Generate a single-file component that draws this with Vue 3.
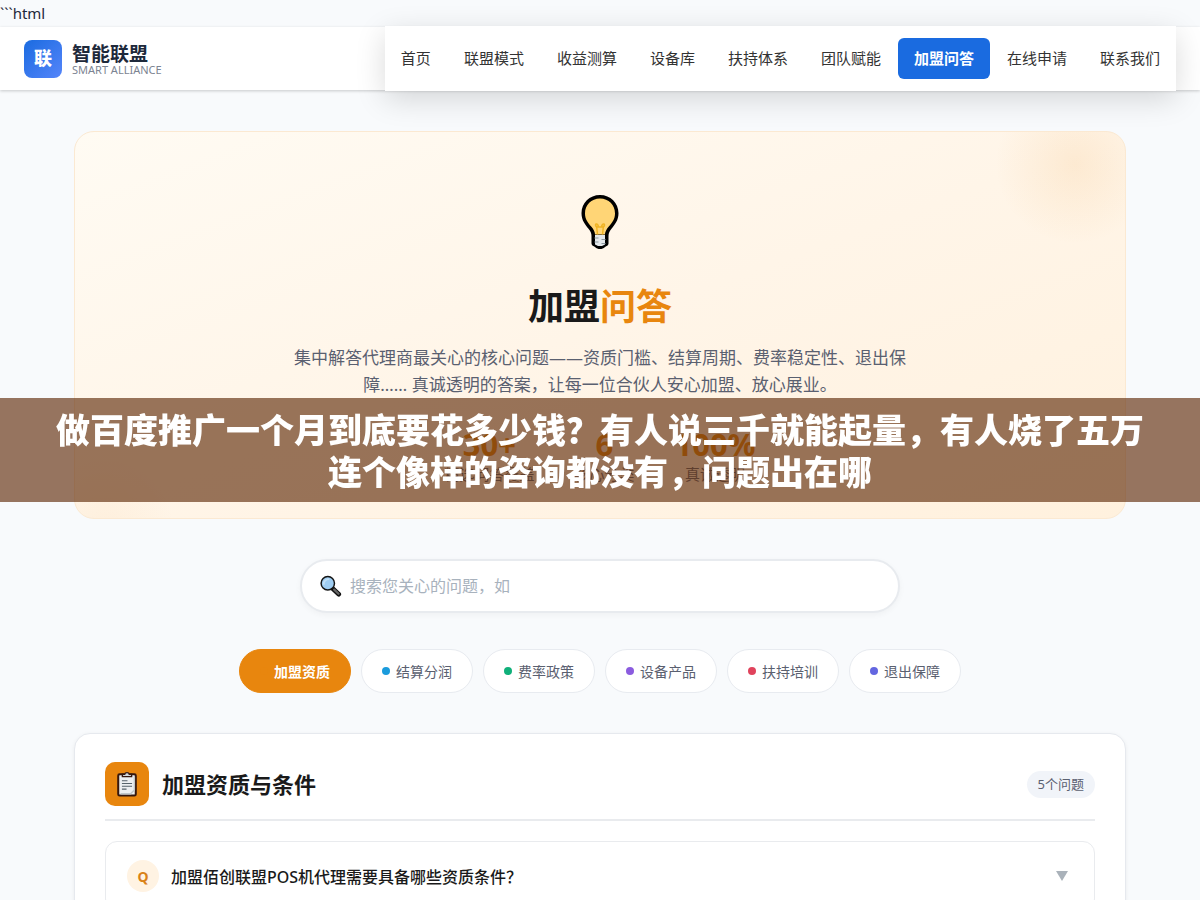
<script setup>
import { ref, computed } from 'vue'

const navItems = ['首页', '联盟模式', '收益测算', '设备库', '扶持体系', '团队赋能', '加盟问答', '在线申请', '联系我们']
const activeNav = ref('加盟问答')

const stats = [
  { value: '30+', label: '精选问答覆盖' },
  { value: '6', label: '核心分类' },
  { value: '100%', label: '真诚透明' },
]

const categories = [
  { name: '加盟资质', tone: 'orange' },
  { name: '结算分润', tone: 'blue' },
  { name: '费率政策', tone: 'green' },
  { name: '设备产品', tone: 'purple' },
  { name: '扶持培训', tone: 'red' },
  { name: '退出保障', tone: 'indigo' },
]
const activeCategory = ref('加盟资质')

const keyword = ref('')
const questions = ['加盟佰创联盟POS机代理需要具备哪些资质条件？']
const visibleQuestions = computed(() => questions.filter(q => q.includes(keyword.value.trim())))
</script>

<template>
  <div class="page">
    <div class="stray-text">```html</div>

    <header class="site-header">
      <a href="#" class="brand">
        <span class="brand-mark">联</span>
        <span class="brand-text">
          <span class="brand-name">智能联盟</span>
          <span class="brand-sub">SMART ALLIANCE</span>
        </span>
      </a>
      <nav class="site-nav">
        <a
          v-for="item in navItems"
          :key="item"
          href="#"
          class="nav-link"
          :class="{ active: item === activeNav }"
          @click.prevent="activeNav = item"
        >{{ item }}</a>
      </nav>
    </header>

    <main class="container">
      <section class="hero">
        <svg class="hero-icon" viewBox="0 0 56 56" aria-hidden="true">
          <path d="M28 1C17.500 1 9.500 9 9.500 19.300c0 7 3.600 11.400 7 15.400 2 2.400 3 4.300 3 7.300v7.500c0 2 2 2.500 3.500 3.500 1.500 1.400 3 2 5 2s3.500-.6 5-2c1.500-1 3.500-1.500 3.500-3.500V42c0-3 1-4.900 3-7.300 3.400-4 7-8.400 7-15.400C46.500 9 38.500 1 28 1z" fill="#000" />
          <path d="M28 4.500c-8.700 0-15 6.600-15 14.900 0 5.700 3 9.300 6.200 13.100 2.100 2.500 3.600 4.700 3.900 8h9.800c.3-3.300 1.800-5.500 3.900-8 3.200-3.800 6.200-7.400 6.200-13.100 0-8.300-6.300-14.900-15-14.900z" fill="#ffd576" />
          <path d="M25.500 40.500l-1-9M30.500 40.500l1-9M24.500 33c-3-3 1.500-5 2 0M31.500 33c3-3-1.500-5-2 0M24.500 33h7" fill="none" stroke="#f0b323" stroke-width="1.500" />
          <path d="M23 41h10v9.500l-3 1.500h-4l-3-1.500z" fill="#e3e8eb" />
          <path d="M22.500 44h4M29.500 45.500h4M22.500 48h4M29.500 49.500h4" stroke="#8d999f" stroke-width="1" />
        </svg>
        <h1 class="hero-title">加盟<span>问答</span></h1>
        <p class="hero-desc">集中解答代理商最关心的核心问题——资质门槛、结算周期、费率稳定性、退出保障…… 真诚透明的答案，让每一位合伙人安心加盟、放心展业。</p>
        <div class="hero-stats">
          <div v-for="stat in stats" :key="stat.label" class="stat">
            <span class="stat-value">{{ stat.value }}</span>
            <span class="stat-label">{{ stat.label }}</span>
          </div>
        </div>
      </section>

      <label class="search">
        <svg class="search-icon" viewBox="0 0 24 24" aria-hidden="true">
          <path d="M13.500 14.500l7 6.500" stroke="#111" stroke-width="5" stroke-linecap="round" />
          <path d="M15.500 16l4.700 4.500" stroke="#666" stroke-width="2.500" stroke-linecap="round" />
          <circle cx="8.500" cy="9" r="7.300" fill="#9fcdf2" stroke="#151515" stroke-width="1.600" />
          <path d="M4 10.500c0-4 3-6 6-6" fill="none" stroke="#c3e0f7" stroke-width="2" />
        </svg>
        <input v-model="keyword" type="text" aria-label="搜索问题" placeholder="搜索您关心的问题，如">
      </label>

      <div class="categories">
        <button
          v-for="cat in categories"
          :key="cat.name"
          type="button"
          class="category"
          :class="[cat.tone, { active: cat.name === activeCategory }]"
          @click="activeCategory = cat.name"
        >
          <span class="dot"></span>{{ cat.name }}
        </button>
      </div>

      <section class="faq-card">
        <div class="faq-header">
          <span class="faq-icon">
            <svg viewBox="0 0 26 28" aria-hidden="true">
              <rect x="3.500" y="3.500" width="19" height="23" rx="1.500" fill="#eceff1" stroke="#35180f" stroke-width="2.200" />
              <path d="M6 24.500h11l4-4V6" fill="none" stroke="#bfc7cb" stroke-width="1.500" />
              <path d="M8 6V3.500h2.500C11 1 15 1 15.500 3.500H18V6z" fill="#d2d8dc" stroke="#35180f" stroke-width="1.500" />
              <path d="M7.500 10.500h6M7.500 13.500h11M7.500 16.500h11M7.500 19.500h5" stroke="#56636b" stroke-width="1.200" />
            </svg>
          </span>
          <h2 class="faq-title">加盟资质与条件</h2>
          <span class="faq-count">5个问题</span>
        </div>

        <button v-for="question in visibleQuestions" :key="question" type="button" class="faq-item">
          <span class="faq-q">Q</span>
          <span class="faq-question">{{ question }}</span>
          <svg class="faq-arrow" viewBox="0 0 12 10" aria-hidden="true"><path d="M0 0h12L6 10z" /></svg>
        </button>
      </section>
    </main>

    <div class="headline">做百度推广一个月到底要花多少钱？有人说三千就能起量，有人烧了五万连个像样的咨询都没有，问题出在哪</div>
  </div>
</template>

<style>
body {
  background: #f8fafc;
}
</style>

<style scoped>
.page {
  min-height: 100vh;
  overflow: hidden;
  background: #f8fafc;
  color: #1e293b;
  font-family: "Noto Sans", "Noto Sans CJK SC", sans-serif;
  font-size: 16px;
  line-height: 27px;
}

.page * {
  box-sizing: border-box;
}

.stray-text {
  font-size: 15px;
}

.site-header {
  display: flex;
  justify-content: space-between;
  align-items: center;
  height: 63px;
  padding: 0 24px;
  background: #fff;
  box-shadow: 0 1px 3px rgba(0, 0, 0, 0.2);
}

.brand {
  display: flex;
  align-items: center;
  gap: 10px;
  color: #1e293b;
  text-decoration: none;
}

.brand-mark {
  display: flex;
  align-items: center;
  justify-content: center;
  width: 38px;
  height: 38px;
  border-radius: 8px;
  background: linear-gradient(135deg, #1a6be0, #5585fa);
  color: #fff;
  font-size: 18px;
  font-weight: 800;
}

.brand-text {
  display: flex;
  flex-direction: column;
  padding-top: 2px;
}

.brand-name {
  font-size: 19px;
  font-weight: 700;
  line-height: 20px;
}

.brand-sub {
  color: #7c8492;
  font-size: 11px;
  line-height: 12px;
}

.site-nav {
  display: flex;
  align-items: center;
  gap: 1px;
  height: 65px;
  background: #fff;
  box-shadow: 0 8px 30px rgba(0, 0, 0, 0.15);
}

.nav-link {
  padding: 7px 16px;
  border-radius: 6px;
  color: #333;
  font-size: 15px;
  white-space: nowrap;
  text-decoration: none;
}

.nav-link.active {
  background: #1a6be0;
  color: #fff;
  font-weight: 700;
}

.container {
  max-width: 1100px;
  margin: 0 auto;
  padding: 41px 24px;
}

.hero {
  padding: 62px 24px 32px;
  border: 1px solid #fbe9d2;
  border-radius: 20px;
  background:
    radial-gradient(circle at calc(100% - 50px) 32px, rgba(232, 134, 14, 0.1), transparent 80px),
    radial-gradient(circle at 30px calc(100% + 10px), rgba(232, 134, 14, 0.05), transparent 70px),
    linear-gradient(160deg, #fffbf3, #fff5e8 50%, #fff1de);
  text-align: center;
}

.hero-icon {
  display: block;
  width: 56px;
  height: 56px;
  margin: 0 auto 32px;
}

.hero-title {
  margin: 0 0 12px;
  color: #1a1a1a;
  font-size: 36px;
  font-weight: 700;
  line-height: 50px;
}

.hero-title span {
  color: #e8860e;
}

.hero-desc {
  max-width: 620px;
  margin: 0 auto;
  color: #5a6070;
  font-size: 17px;
}

.hero-stats {
  display: flex;
  justify-content: center;
  gap: 40px;
  margin-top: 28px;
}

.stat {
  display: flex;
  flex-direction: column;
}

.stat-value {
  color: #e8860e;
  font-size: 31px;
  font-weight: 700;
  line-height: 36px;
}

.stat-label {
  color: #5a6070;
  font-size: 15px;
  line-height: 24px;
}

.search {
  display: flex;
  align-items: center;
  gap: 8px;
  max-width: 600px;
  height: 54px;
  margin: 40px auto 36px;
  padding: 0 18px;
  border: 2px solid #e8ebef;
  border-radius: 27px;
  background: #fff;
  box-shadow: 0 2px 6px rgba(0, 0, 0, 0.04);
}

.search-icon {
  width: 22px;
  height: 24px;
  flex: none;
}

.search input {
  flex: 1;
  padding: 0;
  border: 0;
  outline: 0;
  background: none;
  color: #1e293b;
  font-family: inherit;
  font-size: 16px;
}

.search input::placeholder {
  color: #a8b2bd;
}

.categories {
  display: flex;
  flex-wrap: wrap;
  justify-content: center;
  gap: 10px;
}

.category {
  display: flex;
  align-items: center;
  gap: 6px;
  height: 44px;
  padding: 0 20px;
  border: 1px solid #e8ebf0;
  border-radius: 22px;
  background: #fff;
  color: #5a6070;
  font-family: inherit;
  font-size: 14px;
  cursor: pointer;
}

.category.active {
  border-color: #e8860e;
  background: #e8860e;
  color: #fff;
  font-weight: 700;
}

.dot {
  width: 8px;
  height: 8px;
  border-radius: 50%;
}

.orange .dot {
  background: #e8860e;
}

.blue .dot {
  background: #1a9bdc;
}

.green .dot {
  background: #10b07a;
}

.purple .dot {
  background: #8b5cdf;
}

.red .dot {
  background: #e0435c;
}

.indigo .dot {
  background: #6366e0;
}

.faq-card {
  margin-top: 40px;
  padding: 28px 30px;
  border: 1px solid #e6e9ee;
  border-radius: 16px;
  background: #fff;
  box-shadow: 0 1px 4px rgba(0, 0, 0, 0.06);
}

.faq-header {
  display: flex;
  align-items: center;
  gap: 13px;
  margin-bottom: 20px;
  padding-bottom: 13px;
  border-bottom: 2px solid #e9ebee;
}

.faq-icon {
  display: flex;
  align-items: center;
  justify-content: center;
  width: 44px;
  height: 44px;
  border-radius: 10px;
  background: #e8860e;
}

.faq-icon svg {
  width: 24px;
  height: 26px;
}

.faq-title {
  flex: 1;
  margin: 0;
  color: #1a1a1a;
  font-size: 22px;
  font-weight: 700;
}

.faq-count {
  padding: 0 11px;
  border-radius: 14px;
  background: #f1f4f9;
  color: #5a6070;
  font-size: 13px;
}

.faq-item {
  display: flex;
  align-items: center;
  gap: 12px;
  width: 100%;
  padding: 18px 26px 18px 21px;
  border: 1px solid #e9ebee;
  border-radius: 12px;
  background: #fff;
  color: #1a1a1a;
  font-family: inherit;
  font-size: 16px;
  text-align: left;
  cursor: pointer;
}

.faq-q {
  display: flex;
  align-items: center;
  justify-content: center;
  width: 32px;
  height: 32px;
  border-radius: 50%;
  background: #fff3e3;
  color: #d98218;
  font-size: 14px;
  font-weight: 700;
}

.faq-question {
  flex: 1;
  font-weight: 500;
}

.faq-arrow {
  width: 12px;
  height: 10px;
  fill: #aab2ba;
}

.headline {
  position: fixed;
  top: 50%;
  left: 0;
  right: 0;
  transform: translateY(-50%);
  padding: 10px 50px;
  background: rgba(97, 44, 10, 0.65);
  color: #fff;
  font-family: "Noto Sans CJK SC", sans-serif;
  font-size: 34px;
  font-weight: 900;
  line-height: 42px;
  text-align: center;
}
</style>
